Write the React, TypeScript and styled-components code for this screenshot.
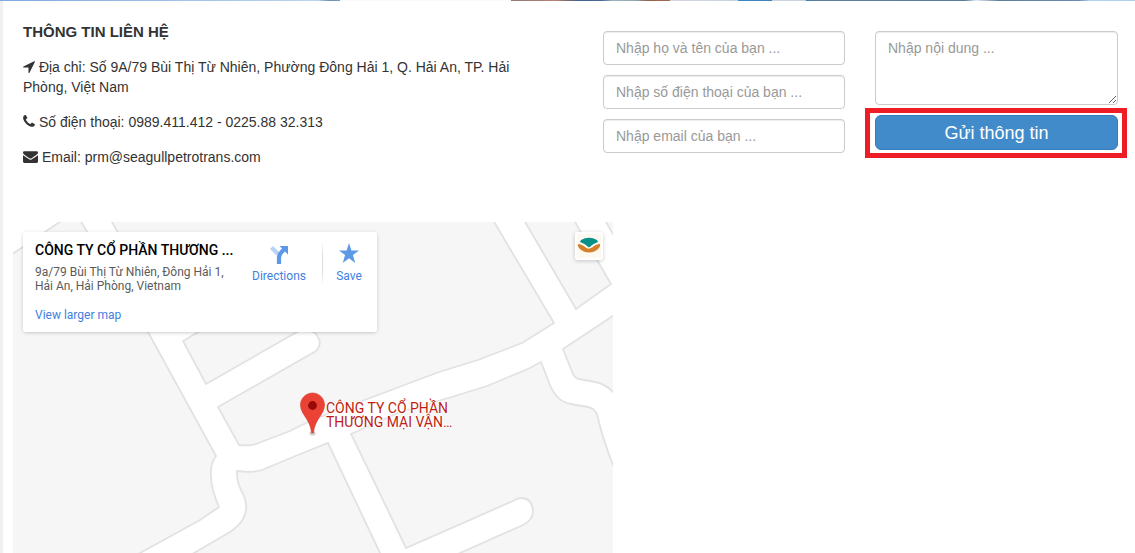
import React from 'react';
import styled, { createGlobalStyle } from 'styled-components';

const GlobalStyle = createGlobalStyle`
  *, *::before, *::after { box-sizing: border-box; }
  body {
    margin: 0;
    background: #fff;
    color: #333;
    font: 14px/20px "Liberation Sans", Arial, sans-serif;
  }
`;

const Page = styled.div`
  display: flex;
  flex-direction: column;
  min-height: 100vh;
`;

const BannerEdge = styled.div`
  height: 1px;
  background: linear-gradient(
    to right,
    #7faade 0%, #bcd3ee 28%, #6e8fb5 29%, #7e9bbd 30%,
    #f8fafb 30%, #f8fafb 45%, #8f7b76 45%, #b98079 49%, #7d6a70 50%,
    #3f6595 51%, #47688f 53%, #9fb4bd 54%, #8fa7b3 56%, #96614c 57%, #a06a50 59%,
    #d3d7de 59%, #c9d2dd 65%, #3d87c8 65%, #3d80bb 68%, #ccd3dc 68%, #ccd3dc 71%,
    #3d80bb 71%, #5f7f9c 72%, #5b7b99 85%, #e5edf5 86%, #5f7f9c 88%,
    #6a8bb0 95%, #b5d2f0 96%, #aecdf0 100%
  );
`;

const Content = styled.main`
  flex: 1;
  display: flex;
  flex-direction: column;
  border-left: 3px solid #f0f0f0;
`;

const ContactForm = styled.form`
  display: grid;
  grid-template-columns: 550fr 242fr 243fr;
  column-gap: 30px;
  min-height: 221px;
  padding: 20px 17px 40px 20px;
  align-items: start;
`;

const Info = styled.section`
  padding-right: 20px;
`;

const Heading = styled.h2`
  margin: 0 0 15px;
  font-size: 15px;
  line-height: 21px;
  font-weight: 700;
`;

const InfoLine = styled.p`
  margin: 0 0 15px;
`;

const Glyph = styled.svg<{ $width: number }>`
  width: ${(p) => p.$width}px;
  height: 15px;
  fill: currentColor;
  vertical-align: -2px;
`;

const Fields = styled.div`
  display: flex;
  flex-direction: column;
  gap: 10px;
  padding-top: 10px;
`;

const fieldLook = `
  display: block;
  width: 100%;
  padding: 6px 12px;
  border: 1px solid #ccc;
  border-radius: 4px;
  background: #fff;
  box-shadow: inset 0 1px 1px rgba(0, 0, 0, 0.075);
  color: #555;
  font: inherit;
  &::placeholder { color: #999; opacity: 1; }
`;

const TextInput = styled.input`
  ${fieldLook}
  height: 34px;
`;

const TextArea = styled.textarea`
  ${fieldLook}
  height: 74px;
  resize: vertical;
`;

const Highlight = styled.div`
  position: relative;
  &::after {
    content: "";
    position: absolute;
    inset: -7px -9px -8px -10px;
    border: 5px solid #ee1c25;
    pointer-events: none;
  }
`;

const SubmitButton = styled.button`
  display: block;
  width: 100%;
  height: 35px;
  padding: 0;
  border: 1px solid #357ebd;
  border-radius: 6px;
  background: #428bca;
  color: #fff;
  font: 18px/24px "Liberation Sans", Arial, sans-serif;
  cursor: pointer;
`;

const MapFrame = styled.section`
  position: relative;
  flex: 1;
  width: 600px;
  max-width: calc(100% - 20px);
  min-height: 320px;
  margin-left: 10px;
  overflow: hidden;
  background: #fff;
  font-family: Roboto, sans-serif;
`;

const Roads = styled.svg`
  position: absolute;
  top: 0;
  left: 0;
  display: block;
  fill: #f6f6f6;
  stroke: #e2e2e2;
  stroke-width: 1.8;
`;

const PlaceCard = styled.div`
  position: absolute;
  top: 10px;
  left: 10px;
  display: flex;
  width: 354px;
  height: 100px;
  padding: 10px 0 8px 12px;
  border-radius: 2px;
  background: #fff;
  box-shadow: 0 1px 4px -1px rgba(0, 0, 0, 0.3);
  font-size: 12px;
  line-height: 14px;
`;

const PlaceText = styled.div`
  display: flex;
  flex-direction: column;
  width: 205px;
`;

const PlaceName = styled.div`
  margin-bottom: 7px;
  color: #000;
  font-size: 14px;
  line-height: 16px;
  font-weight: 500;
  white-space: nowrap;
`;

const PlaceAddress = styled.div`
  margin-bottom: 15px;
  color: #5b5b5b;
`;

const MapLink = styled.a`
  color: #427fe0;
  text-decoration: none;
`;

const Action = styled(MapLink)<{ $width: number }>`
  display: flex;
  flex-direction: column;
  align-items: center;
  gap: 5px;
  width: ${(p) => p.$width}px;
`;

const Divider = styled.div`
  width: 1px;
  height: 43px;
  margin-left: 4px;
  background: linear-gradient(to bottom, #fff, #ddd 30%, #ddd 70%, #fff);
`;

const LogoTile = styled.div`
  position: absolute;
  top: 10px;
  right: 10px;
  width: 28px;
  height: 28px;
  padding: 2px;
  border-radius: 2px;
  background: #fff;
  box-shadow: 0 1px 4px rgba(0, 0, 0, 0.2);
  svg { display: block; }
`;

const Marker = styled.div`
  position: absolute;
  top: 170px;
  left: 287px;
  display: flex;
  gap: 1px;
`;

const MarkerLabel = styled.div`
  padding-top: 9px;
  color: #bd1d14;
  font-size: 14px;
  line-height: 14px;
  white-space: nowrap;
  text-shadow: 0 0 2px #fff, 1px 0 1px #fff, -1px 0 1px #fff, 0 1px 1px #fff, 0 -1px 1px #fff;
`;

const blocks = [
  'M5 259L70 215L77 215L148 332L216 456Q210 464 211 476Q211 489 219 507L200 520L140 553L20 620L5 620Z',
  'M183 341L206 384L297 332Q307 327 315 333Q324 343 316 351L218 407L239 445Q249 446 256 444L290 431L308 422L340 409L370 398L439 372L478 360L522 343L554 323L490 215L108 215L125 245L215 322Z',
  'M80 620L194 553L230 532Q239 526 243 519Q249 509 244 496Q236 482 237 471Q252 473 262 470L293 457L328 443L380 553L410 620Z',
  'M351 434L400 412L455 396L487 386L530 368L541 362L550 385Q557 402 571 404L588 407Q596 408 598 418Q603 440 613 465L625 495L625 620L320 620L460 553L523 525Q533 520 533 511Q532 498 521 498Q518 498 513 501L406 548L370 473Z',
  'M521 215L576 309L611 284L571 215Z',
  'M602 215L606 222L613 234L625 255L625 215Z',
  'M563 349L625 308L625 403L613 392Q604 383 595 382L579 379Q576 379 573 374Z',
];

const paths = {
  arrow:
    'M1593 349l-640 1280q-17 35-57 35-5 0-15-2-22-5-35.5-22.5t-13.5-39.5v-576h-576q-22 0-39.5-13.5t-22.5-35.5 4-42 29-30l1280-640q13-7 29-7 27 0 45 19 15 14 18.5 34.5t-6.5 39.5z',
  phone:
    'M1408 1240q0 27-10 70.5t-21 68.5q-21 50-122 106-94 51-186 51-27 0-53-3.5t-57.5-12.5-47-14.5-55.5-20.5-49-18q-98-35-175-83-127-79-264-216t-216-264q-48-77-83-175-3-9-18-49t-20.5-55.5-14.5-47-12.5-57.5-3.5-53q0-92 51-186 56-101 106-122 25-11 68.5-21t70.5-10q14 0 21 3 18 6 53 76 11 19 30 54t35 63.5 31 53.5q3 4 17.5 25t21.5 35.5 7 28.5q0 20-28.5 50t-62 55-62 53-28.5 46q0 9 5 22.5t8.5 20.5 14 24 11.5 19q76 137 174 235t235 174q2 1 19 11.5t24 14 20.5 8.5 22.5 5q18 0 46-28.5t53-62 55-62 50-28.5q14 0 28.5 7t35.5 21.5 25 17.5q25 15 53.5 31t63.5 35 54 30q70 35 76 53 3 7 3 21z',
  envelope:
    'M1792 710v794q0 66-47 113t-113 47h-1472q-66 0-113-47t-47-113v-794q44 49 101 87 362 246 497 345 57 42 92.5 65.5t94.5 48 110 24.5h2q51 0 110-24.5t94.5-48 92.5-65.5q170-123 498-345 57-39 100-87zm0-294q0 79-49 151t-122 123q-376 261-468 325-10 7-42.5 31t-54 38.5-52 32.5-57.5 27-50 9h-2q-23 0-50-9t-57.5-27-52-32.5-54-38.5-42.5-31q-91-64-262-182.5t-205-142.5q-62-42-117-115.5t-55-136.5q0-78 41.5-130t118.5-52h1472q65 0 112.5 47t47.5 113z',
};

export default function App() {
  return (
    <Page>
      <GlobalStyle />
      <BannerEdge />
      <Content>
        <ContactForm onSubmit={(e) => e.preventDefault()}>
          <Info>
            <Heading>THÔNG TIN LIÊN HỆ</Heading>
            <InfoLine>
              <Glyph $width={12} viewBox="190 0 1408 1792" aria-hidden="true"><path d={paths.arrow} /></Glyph>
              {' '}Địa chỉ: Số 9A/79 Bùi Thị Từ Nhiên, Phường Đông Hải 1, Q. Hải An, TP. Hải Phòng, Việt Nam
            </InfoLine>
            <InfoLine>
              <Glyph $width={12} viewBox="0 0 1408 1792" aria-hidden="true"><path d={paths.phone} /></Glyph>
              {' '}Số điện thoại: 0989.411.412 - 0225.88 32.313
            </InfoLine>
            <InfoLine>
              <Glyph $width={15} viewBox="0 0 1792 1792" aria-hidden="true"><path d={paths.envelope} /></Glyph>
              {' '}Email: prm@seagullpetrotrans.com
            </InfoLine>
          </Info>
          <Fields>
            <TextInput type="text" aria-label="Họ và tên" placeholder="Nhập họ và tên của bạn ..." />
            <TextInput type="tel" aria-label="Số điện thoại" placeholder="Nhập số điện thoại của bạn ..." />
            <TextInput type="email" aria-label="Email" placeholder="Nhập email của bạn ..." />
          </Fields>
          <Fields>
            <TextArea aria-label="Nội dung" placeholder="Nhập nội dung ..." />
            <Highlight>
              <SubmitButton type="submit">Gửi thông tin</SubmitButton>
            </Highlight>
          </Fields>
        </ContactForm>

        <MapFrame aria-label="Map">
          <Roads width="600" height="390" viewBox="13 222 600 390" aria-hidden="true">
            {blocks.map((d) => <path key={d} d={d} />)}
          </Roads>

          <Marker>
            <svg width="25" height="44" viewBox="0 0 25 44" aria-hidden="true">
              <ellipse cx="12.5" cy="41.5" rx="3" ry="2" fill="#bbb" opacity="0.7" />
              <path d="M12.5 1C6 1 .5 6 .5 13c0 5 3 9 5.500 13 3 4.500 5 9 5.500 15h2c.5-6 2.500-10.500 5.500-15 2.500-4 5.500-8 5.500-13C24.500 6 19 1 12.500 1Z" fill="#ea4335" stroke="#d23f31" strokeWidth=".6" />
              <circle cx="12.5" cy="13.500" r="4.400" fill="#960a0a" />
            </svg>
            <MarkerLabel>CÔNG TY CỔ PHẦN<br />THƯƠNG MẠI VẬN…</MarkerLabel>
          </Marker>

          <PlaceCard>
            <PlaceText>
              <PlaceName>CÔNG TY CỔ PHẦN THƯƠNG ...</PlaceName>
              <PlaceAddress>9a/79 Bùi Thị Từ Nhiên, Đông Hải 1,<br />Hải An, Hải Phòng, Vietnam</PlaceAddress>
              <MapLink href="#map">View larger map</MapLink>
            </PlaceText>
            <Action href="#directions" $width={78}>
              <svg width="22" height="22" viewBox="0 0 22 22" aria-hidden="true">
                <path d="M3.500 5.500L10 12" fill="none" stroke="#b8d3f5" strokeWidth="4.200" />
                <path d="M11 22v-6c0-3 1-4.500 3-6.500l2.500-2.500" fill="none" stroke="#5c99e6" strokeWidth="4.200" />
                <path d="M11.500 4H20v8.500Z" fill="#5c99e6" />
              </svg>
              Directions
            </Action>
            <Divider />
            <Action href="#save" $width={52}>
              <svg width="22" height="22" viewBox="0 0 22 22" aria-hidden="true">
                <path d="M11 1L13.400 8.600H21L14.900 13.100L17.200 21L11 16.200L4.800 21L7.100 13.100L1 8.600H8.600Z" fill="#5c99e6" />
              </svg>
              Save
            </Action>
          </PlaceCard>

          <LogoTile>
            <svg width="24" height="24" viewBox="0 0 24 24" aria-hidden="true">
              <rect width="24" height="24" fill="#fdf9f1" />
              <path d="M4 6Q12 1.500 20 6L21 8Q16 9.500 12 13.500Q8 9.500 3 8Z" fill="#088f87" />
              <path d="M1 10Q4.500 10 9.500 14Q12 15.500 15 13.500Q19 9.500 23 10Q23.500 13 20.500 15.500Q17 18.500 12 18.500Q7 18.500 3.500 15.500Q.5 13 1 10Z" fill="#d57f2b" />
            </svg>
          </LogoTile>
        </MapFrame>
      </Content>
    </Page>
  );
}
